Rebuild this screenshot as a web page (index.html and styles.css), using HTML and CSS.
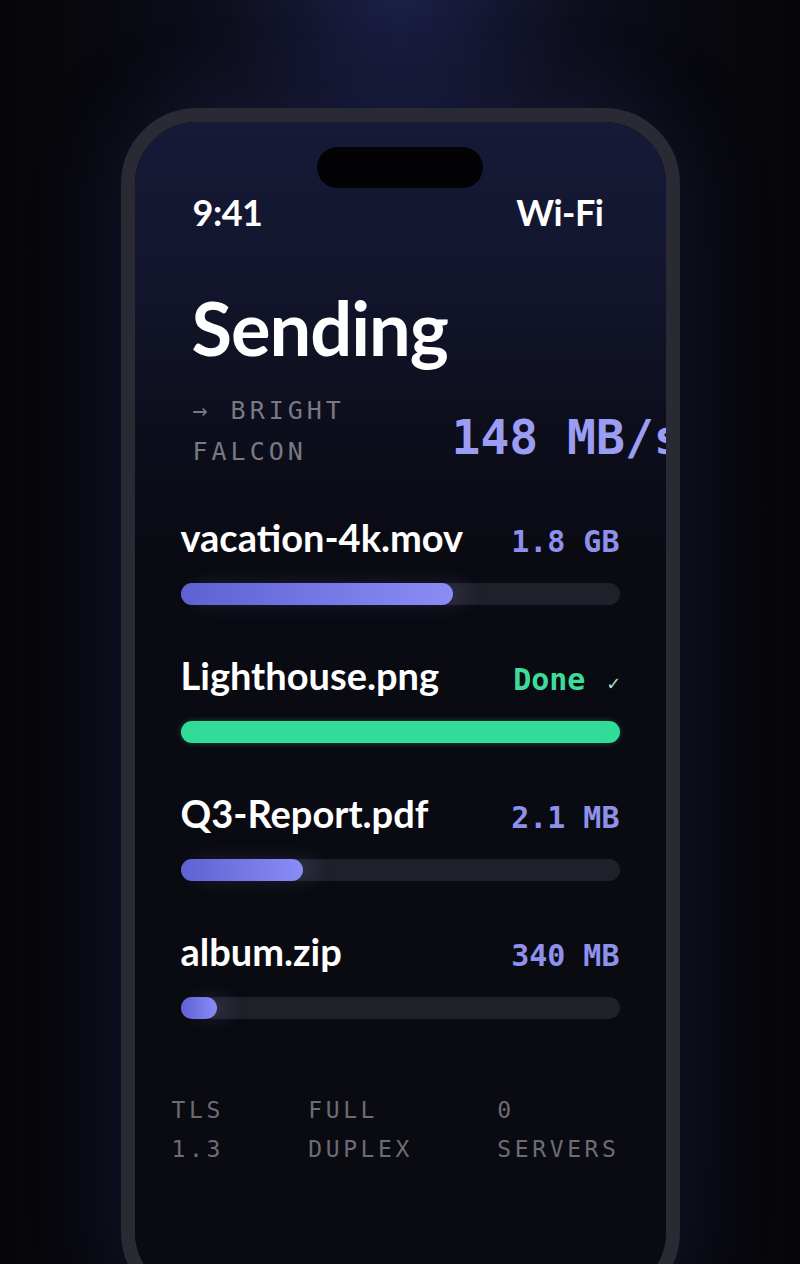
FILE: index.html
```html
<!DOCTYPE html>
<html lang="en">

<head>
    <meta charset="UTF-8">
    <meta name="viewport" content="width=device-width, initial-scale=1.0">
    <title>Sending</title>
    <link rel="stylesheet" href="styles.css">
</head>

<body>
    <div class="phone">
        <div class="screen">
            <!-- Dynamic island -->
            <div class="island"></div>

            <div class="status-bar">
                <span>9:41</span>
                <span>Wi-Fi</span>
            </div>

            <h1 class="title">Sending</h1>

            <div class="peer-row">
                <div class="peer">&rarr; BRIGHT FALCON</div>
                <div class="speed">148 MB/s</div>
            </div>

            <!-- Transfers -->
            <div class="files">
                <div class="file">
                    <div class="file-head">
                        <span class="file-name">vacation-4k.mov</span>
                        <span class="file-size">1.8 GB</span>
                    </div>
                    <div class="track"><div class="fill" style="width: 62%"></div></div>
                </div>
                <div class="file">
                    <div class="file-head">
                        <span class="file-name">Lighthouse.png</span>
                        <span class="file-size done">Done <small>&#10003;</small></span>
                    </div>
                    <div class="track"><div class="fill complete" style="width: 100%"></div></div>
                </div>
                <div class="file">
                    <div class="file-head">
                        <span class="file-name">Q3-Report.pdf</span>
                        <span class="file-size">2.1 MB</span>
                    </div>
                    <div class="track"><div class="fill" style="width: 28%"></div></div>
                </div>
                <div class="file">
                    <div class="file-head">
                        <span class="file-name">album.zip</span>
                        <span class="file-size">340 MB</span>
                    </div>
                    <div class="track"><div class="fill" style="width: 8%"></div></div>
                </div>
            </div>

            <div class="stats">
                <div>TLS<br>1.3</div>
                <div>FULL<br>DUPLEX</div>
                <div>0<br>SERVERS</div>
            </div>
        </div>
    </div>
</body>

</html>
```

FILE: styles.css
```css
body {
    margin: 0;
    height: 1264px;
    overflow: hidden;
    background-color: #07070c;
    background-image:
        radial-gradient(ellipse 300px 260px at 400px 0, rgba(34, 40, 92, 0.7), rgba(20, 22, 50, 0.3) 60%, transparent 100%),
        linear-gradient(90deg, #06060a 0%, #0b0b14 30%, #0b0b14 70%, #06060a 100%);
    font-family: 'Lato', 'Liberation Sans', sans-serif;
    color: #fff;
}

/* Phone */
.phone {
    width: 559px;
    height: 1200px;
    margin: 108px auto 0;
    box-sizing: border-box;
    border: 14px solid #2a2a34;
    border-radius: 76px;
    background-color: #0a0a12;
    box-shadow: 0 0 90px rgba(50, 56, 130, 0.28);
}

.screen {
    height: 100%;
    border-radius: 62px;
    overflow: hidden;
    background: linear-gradient(180deg, #161a37 0%, #12152c 14%, #0d0e1c 26%, #0a0a12 38%, #0a0a11 100%);
}

.island {
    width: 166px;
    height: 41px;
    margin: 25px auto 0;
    border-radius: 21px;
    background-color: #030306;
}

.status-bar {
    display: flex;
    justify-content: space-between;
    padding: 0 62px 0 58px;
    margin-top: 4px;
    font-size: 36px;
    font-weight: 700;
    line-height: 40px;
    letter-spacing: -0.5px;
}

.title {
    margin: 56px 0 0;
    padding-left: 57px;
    font-size: 74px;
    font-weight: 700;
    line-height: 80px;
    letter-spacing: -1px;
}

.peer-row {
    display: flex;
    align-items: flex-start;
    padding-left: 58px;
    margin-top: 22px;
    white-space: nowrap;
}

.peer {
    flex: 0 0 230px;
    margin-right: 29px;
    white-space: normal;
    font-family: 'DejaVu Sans Mono', 'Liberation Mono', monospace;
    font-size: 25px;
    line-height: 41px;
    letter-spacing: 4px;
    color: #797982;
}

.speed {
    margin-top: 23px;
    font-family: 'DejaVu Sans Mono', 'Liberation Mono', monospace;
    font-size: 48px;
    font-weight: 700;
    line-height: 48px;
    color: #9a9df2;
}

/* Transfers */
.files {
    padding: 0 46px;
    margin-top: 45px;
}

.file + .file {
    margin-top: 50px;
}

.file-head {
    display: flex;
    justify-content: space-between;
    align-items: baseline;
    height: 40px;
}

.file-name {
    font-size: 38px;
    font-weight: 700;
    line-height: 40px;
    letter-spacing: 0;
}

.file-size {
    font-family: 'DejaVu Sans Mono', 'Liberation Mono', monospace;
    font-size: 30px;
    font-weight: 700;
    line-height: 40px;
    color: #8e91ec;
}

.file-size.done {
    color: #3ddc98;
}

.file-size small {
    font-size: 20px;
    font-weight: 400;
    color: #a8e6c9;
    margin-left: 4px;
}

.track {
    height: 22px;
    margin-top: 26px;
    border-radius: 11px;
    background-color: #20202a;
}

.fill {
    height: 100%;
    min-width: 36px;
    border-radius: 11px;
    background: linear-gradient(90deg, #5d61d2, #8a8df5);
    box-shadow: 14px 0 18px rgba(80, 84, 130, 0.3);
}

.fill.complete {
    background: #30dc97;
    box-shadow: 0 0 6px rgba(48, 220, 151, 0.3);
}

/* Footer stats */
.stats {
    display: flex;
    justify-content: space-between;
    padding: 0 46px 0 37px;
    margin-top: 72px;
    font-family: 'DejaVu Sans Mono', 'Liberation Mono', monospace;
    font-size: 23px;
    line-height: 39px;
    letter-spacing: 3.6px;
    color: #6c6c75;
}
```
